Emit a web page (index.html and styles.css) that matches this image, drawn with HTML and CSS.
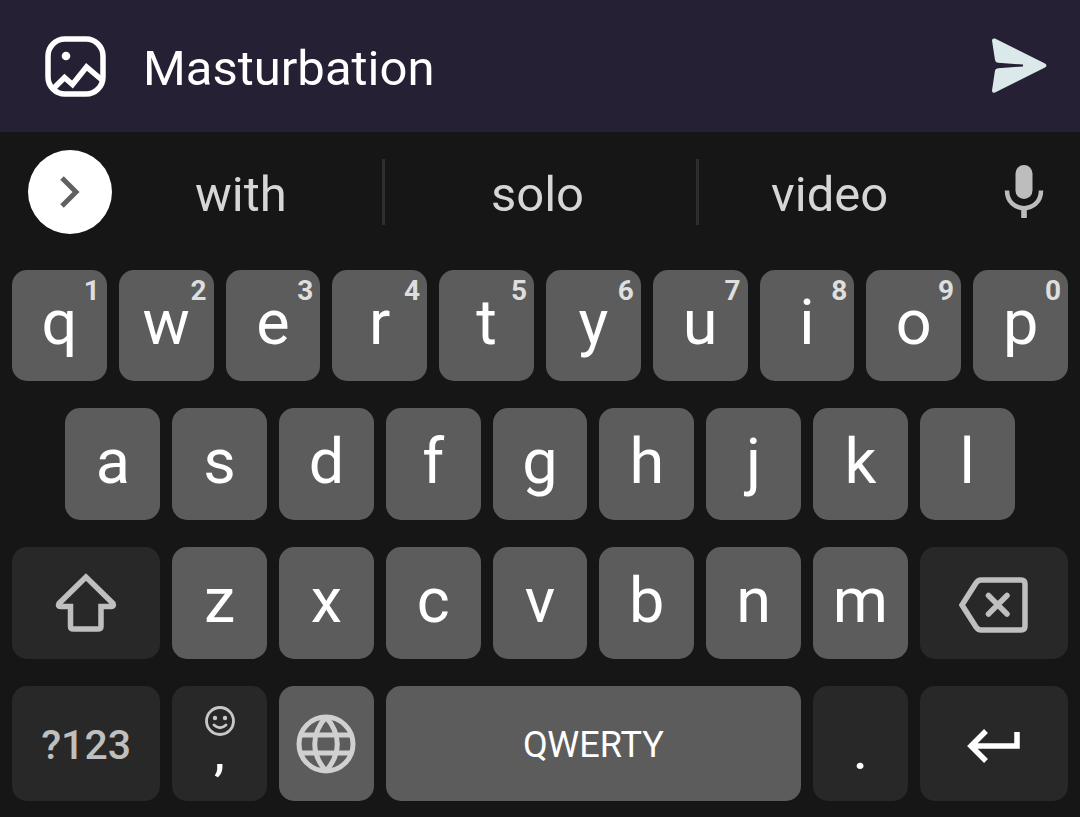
FILE: index.html
```
<!DOCTYPE html>
<html lang="en">
<head>
  <meta charset="UTF-8">
  <meta name="viewport" content="width=device-width, initial-scale=1.0">
  <title>Message</title>
  <link rel="stylesheet" href="styles.css">
</head>
<body>

<form class="message-bar">
  <button class="icon-btn" type="button" aria-label="Add image">
    <svg width="62" height="62" viewBox="0 0 62 62" fill="none" stroke="#fff" stroke-width="5.5">
      <rect x="4" y="4" width="55" height="55" rx="17"/>
      <path d="M9 54L20.500 42.500L28.500 49.500L42.500 32L58 45" stroke-linejoin="miter"/>
      <circle cx="22" cy="21" r="4.300" fill="#fff" stroke="none"/>
    </svg>
  </button>
  <input class="message-input" type="text" value="Masturbation" aria-label="Message">
  <button class="icon-btn" type="submit" aria-label="Send">
    <svg width="56" height="56" viewBox="0 0 56 56" fill="#dce9ea">
      <path d="M0 2.500Q0 0 3 0.500L53 25.500Q56 27.500 53 29.500L3 54.500Q0 55.500 0 52.500L3 32.500Q3.500 30.500 6 30.200L31 28.500V26.500L6 24.800Q3.500 24.500 3 22Z"/>
    </svg>
  </button>
</form>

<div class="suggestions">
  <button class="expand-btn" aria-label="More">
    <svg width="20" height="32" viewBox="0 0 20 32" fill="none" stroke="#616161" stroke-width="5">
      <path d="M2 2L16 16L2 30"/>
    </svg>
  </button>
  <div class="words">
    <button class="word">with</button>
    <button class="word">solo</button>
    <button class="word">video</button>
  </div>
  <button class="mic-btn" aria-label="Voice input">
    <svg width="40" height="54" viewBox="0 0 40 54">
      <rect x="11.500" y="0" width="17" height="34" rx="8.500" fill="#bdbdbd"/>
      <path d="M3 25.500C3 49 37 49 37 25.500M20 43V53" fill="none" stroke="#bdbdbd" stroke-width="4.500"/>
      <path d="M20 43V53" stroke="#bdbdbd" stroke-width="5.500"/>
    </svg>
  </button>
</div>

<div class="keyboard">
  <button class="key">q<span class="hint">1</span></button>
  <button class="key">w<span class="hint">2</span></button>
  <button class="key">e<span class="hint">3</span></button>
  <button class="key">r<span class="hint">4</span></button>
  <button class="key">t<span class="hint">5</span></button>
  <button class="key">y<span class="hint">6</span></button>
  <button class="key">u<span class="hint">7</span></button>
  <button class="key">i<span class="hint">8</span></button>
  <button class="key">o<span class="hint">9</span></button>
  <button class="key">p<span class="hint">0</span></button>

  <button class="key key-indent">a</button>
  <button class="key">s</button>
  <button class="key">d</button>
  <button class="key">f</button>
  <button class="key">g</button>
  <button class="key">h</button>
  <button class="key">j</button>
  <button class="key">k</button>
  <button class="key">l</button>

  <button class="key key-dark key-wide key-first" aria-label="Shift">
    <svg width="62" height="60" viewBox="0 0 62 60" fill="none" stroke="#bfbfbf" stroke-width="5.500">
      <path d="M31 4L4 30.500Q2.500 33.500 5.500 33.500H15.500V53.500Q15.500 56 18.500 56H42.500Q46 56 46 53.500V33.500H56Q59.500 33.500 58 30.500Z"/>
    </svg>
  </button>
  <button class="key">z</button>
  <button class="key">x</button>
  <button class="key">c</button>
  <button class="key">v</button>
  <button class="key">b</button>
  <button class="key">n</button>
  <button class="key">m</button>
  <button class="key key-dark key-wide key-delete" aria-label="Delete">
    <svg width="70" height="56" viewBox="0 0 70 56" fill="none" stroke="#bfbfbf" stroke-width="5.500">
      <path d="M3 28L17 6Q19 3 22 3H62Q66 3 66 7V49Q66 53 62 53H22Q19 53 17 50Z"/>
      <path d="M29.500 18.500L48 37M48 18.500L29.500 37" stroke-linecap="round"/>
    </svg>
  </button>

  <button class="key key-dark key-wide key-symbols">?123</button>
  <button class="key key-dark key-comma" aria-label="Comma, emoji">
    <svg width="30" height="30" viewBox="0 0 30 30" fill="none" stroke="#c8c8c8" stroke-width="2.800">
      <circle cx="15" cy="15" r="13.500"/>
      <path d="M9 19Q15 24.500 21 19" stroke-linecap="round"/>
      <circle cx="10" cy="12" r="2.200" fill="#c8c8c8" stroke="none"/>
      <circle cx="20" cy="12" r="2.200" fill="#c8c8c8" stroke="none"/>
    </svg>
    <span>,</span>
  </button>
  <button class="key key-globe" aria-label="Language">
    <svg width="60" height="60" viewBox="0 0 60 60" fill="none" stroke="#d0d0d0" stroke-width="5">
      <circle cx="30" cy="30" r="27"/>
      <path d="M5 21H55M5 39H55M30 3C15 20 15 40 30 57M30 3C45 20 45 40 30 57"/>
    </svg>
  </button>
  <button class="key key-space">QWERTY</button>
  <button class="key key-dark key-period">.</button>
  <button class="key key-dark key-wide key-enter" aria-label="Enter">
    <svg width="54" height="34" viewBox="0 0 54 34" fill="none" stroke="#fff" stroke-width="5.500">
      <path d="M19 2L4 17L19 32M4 17H50V3"/>
    </svg>
  </button>
</div>

</body>
</html>
```
FILE: styles.css
```
* {
  box-sizing: border-box;
}
body {
  margin: 0;
  min-height: 100vh;
  background-color: #161616;
  color: #fff;
  font-family: Roboto, Arial, sans-serif;
}
button {
  padding: 0;
  border: none;
  background: none;
  color: inherit;
  font-family: inherit;
  cursor: pointer;
}
svg {
  display: block;
}

.message-bar {
  display: flex;
  align-items: center;
  gap: 36px;
  padding: 32px 32px 32px 44px;
  background-color: #252033;
}
.message-input {
  flex: 1;
  min-width: 0;
  height: 68px;
  padding: 4px 0 0 1px;
  border: none;
  outline: none;
  background: none;
  color: #fff;
  font-family: inherit;
  font-size: 49px;
}

.suggestions {
  display: flex;
  align-items: center;
  padding: 18px 14px 36px 28px;
}
.expand-btn {
  display: flex;
  align-items: center;
  justify-content: center;
  width: 84px;
  height: 84px;
  border-radius: 50%;
  background-color: #fff;
}
.words {
  flex: 1;
  display: grid;
  grid-template-columns: 6fr 7fr 6fr;
  margin-right: 16px;
}
.word {
  height: 66px;
  padding: 6px 6px 0 0;
  color: #d6d6d6;
  font-size: 49px;
  line-height: 60px;
}
.word:first-child {
  padding-right: 12px;
}
.word + .word {
  border-left: 3px solid #2e2e2e;
}
.mic-btn {
  display: flex;
  justify-content: center;
  width: 84px;
}

/* 20 half-key columns, a normal key takes two */
.keyboard {
  display: grid;
  grid-template-columns: repeat(20, minmax(0, 1fr));
  grid-template-rows: 111px 112px 112px 115px;
  gap: 27px 12px;
  padding: 0 12px 16px;
}
.key {
  position: relative;
  grid-column: span 2;
  display: flex;
  align-items: center;
  justify-content: center;
  padding-bottom: 5px;
  border-radius: 15px;
  background-color: #5c5c5c;
  font-size: 63px;
  line-height: 64px;
}
.hint {
  position: absolute;
  top: 7px;
  right: 7px;
  color: #dedede;
  font-size: 28px;
  font-weight: bold;
  line-height: 28px;
}
.key-dark {
  background-color: #282828;
}
.key-indent {
  grid-column: 2 / span 2;
}
.key-wide {
  grid-column: span 3;
  padding-bottom: 0;
}
.key-first {
  grid-column: 1 / span 3;
}
.key-delete {
  padding-top: 4px;
}
.key-symbols {
  padding-top: 2px;
  color: #bfbfbf;
  font-size: 41px;
  font-weight: 500;
}
.key-comma {
  flex-direction: column;
  justify-content: flex-start;
  padding-top: 20px;
  font-size: 49px;
  font-weight: 500;
  line-height: 34px;
}
.key-globe {
  padding-bottom: 0;
}
.key-space {
  grid-column: span 8;
  padding: 2px 0 0;
  font-size: 36px;
}
.key-period {
  padding: 18px 0 0;
  font-size: 49px;
  font-weight: 500;
}
.key-enter {
  padding-top: 4px;
}
```
